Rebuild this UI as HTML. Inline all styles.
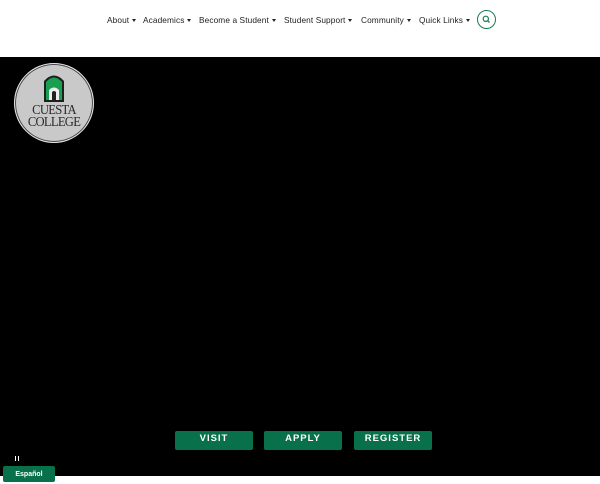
<!DOCTYPE html>
<html><head><style>
body{margin:0;width:600px;height:480px;overflow:hidden;background:#fff;font-family:"Liberation Sans",sans-serif;position:relative}
.nav span{position:absolute;top:15px;font-size:8.3px;color:#222;white-space:nowrap;letter-spacing:0.1px}
.nav span:after{content:"";display:inline-block;margin-left:3px;border-left:2.5px solid transparent;border-right:2.5px solid transparent;border-top:3px solid #222;vertical-align:1px}
.search{position:absolute;left:477px;top:10px;width:17px;height:17px;border:1.5px solid #1a7a50;border-radius:50%}
.hero{position:absolute;left:0;top:57px;width:600px;height:419px;background:#000}
.logo{position:absolute;left:14px;top:63px;width:78px;height:78px;border-radius:50%;background:#c9c9c9;border:1.5px solid #e6e6e6;box-shadow:0 0 0 1px #444 inset}
.logo .t{position:absolute;width:100%;text-align:center;font-family:"Liberation Serif",serif;color:#2a2a2a;font-size:14px;line-height:12px;top:41px;letter-spacing:-0.8px;transform:scaleX(0.9)}
.btn{position:absolute;top:431px;width:78px;height:19px;background:#08704a;border-radius:2px;color:#fff;font-weight:900;font-size:9.5px;text-align:center;line-height:15px;letter-spacing:1px}
.es{position:absolute;left:3px;top:466px;width:52px;height:16px;background:#08704a;border-radius:2px;color:#fff;font-size:7px;text-align:center;line-height:18px;font-weight:bold}
</style></head><body>
<div class="nav"><span style="left:107px">About</span><span style="left:143px">Academics</span><span style="left:199px">Become a Student</span><span style="left:284px">Student Support</span><span style="left:361px">Community</span><span style="left:419px">Quick Links</span></div>
<div class="search"><svg width="17" height="17" viewBox="0 0 17 17"><circle cx="7.8" cy="7.8" r="2.6" fill="none" stroke="#1a7a50" stroke-width="1.2"/><line x1="9.8" y1="9.8" x2="11.5" y2="11.5" stroke="#1a7a50" stroke-width="1.3"/></svg></div>
<div class="hero"></div>
<div class="logo">
<svg style="position:absolute;left:28px;top:8px" width="22" height="30" viewBox="0 0 22 30"><path d="M1 30V9Q11 -2 21 9V30Z" fill="#1e1e1e"/><path d="M3 28V10Q11 1 19 10V28Z" fill="#18a050"/><path d="M6 28V18Q11 13 16 18V28Z" fill="#eee"/><path d="M9 28V20Q11 18 13 20V28Z" fill="#222"/></svg>
<div class="t">CUESTA<br>COLLEGE</div></div>
<div class="btn" style="left:175px">VISIT</div>
<div class="btn" style="left:264px">APPLY</div>
<div class="btn" style="left:354px">REGISTER</div>
<div style="position:absolute;left:15px;top:456px;width:4px;height:5px;border-left:1.5px solid #fff;border-right:1.5px solid #fff;box-sizing:border-box"></div>
<div class="es">Español</div>
</body></html>
